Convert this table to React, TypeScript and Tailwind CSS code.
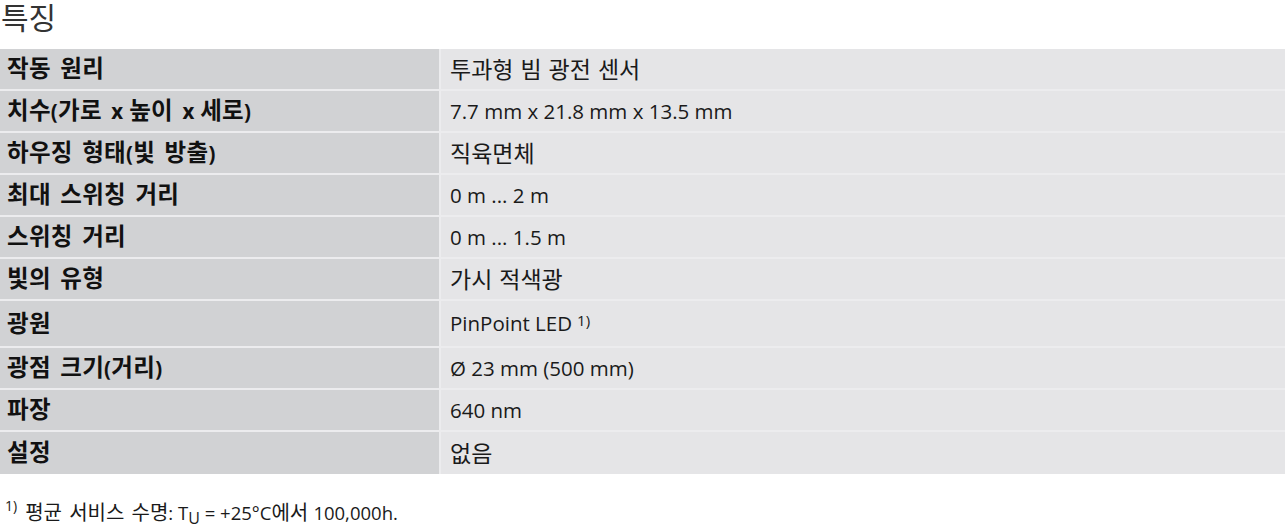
import React from "react";

function K({ t, cls }: { t: string; cls: string }) {
  const parts = t.split(/([\uAC00-\uD7A3][\uAC00-\uD7A3 ]*)/);
  return (
    <>
      {parts.map((p, i) =>
        /[\uAC00-\uD7A3]/.test(p) ? (
          <span key={i} className={cls}>
            {p}
          </span>
        ) : (
          <React.Fragment key={i}>{p}</React.Fragment>
        )
      )}
    </>
  );
}

const rows: { k: string; v: string; tall?: boolean }[] = [
  { k: "작동 원리", v: "투과형 빔 광전 센서" },
  { k: "치수(가로 x 높이 x 세로)", v: "7.7 mm x 21.8 mm x 13.5 mm" },
  { k: "하우징 형태(빛 방출)", v: "직육면체" },
  { k: "최대 스위칭 거리", v: "0 m ... 2 m" },
  { k: "스위칭 거리", v: "0 m ... 1.5 m" },
  { k: "빛의 유형", v: "가시 적색광" },
  { k: "광원", v: "PinPoint LED", tall: true },
  { k: "광점 크기(거리)", v: "Ø 23 mm (500 mm)" },
  { k: "파장", v: "640 nm" },
  { k: "설정", v: "없음" },
];

export default function App() {
  return (
    <div
      className="w-[1285px] h-[532px] bg-white text-[#1a1a1a] overflow-hidden"
      style={{ fontFamily: '"Open Sans", "Noto Sans CJK KR", sans-serif' }}
    >
      <h1 className="text-[30px] leading-[36px] text-[#333] font-normal h-[49px] pl-[1px]">
        특징
      </h1>
      <div className="flex flex-col">
        {rows.map((r, i) => (
          <div
            key={i}
            className={`flex ${r.tall ? "h-[47px]" : "h-[42px]"} ${
              i < rows.length - 1 ? "border-b-2 border-[#ececee]" : ""
            }`}
          >
            <div className="w-[439px] bg-[#d1d2d4] pl-[7px] flex items-center text-[20.5px] font-bold text-[#111] tracking-[0.3px]">
              <span>
                <K t={r.k} cls="text-[23.5px] [word-spacing:3px]" />
              </span>
            </div>
            <div className="w-[2px] bg-[#ececee]" />
            <div className="flex-1 bg-[#e5e5e7] pl-[9px] flex items-center text-[20.5px] text-[#1a1a1a]">
              <span>
                <K t={r.v} cls="text-[23px] [word-spacing:1px]" />
                {r.tall ? (
                  <sup className="text-[15px] ml-[5px] relative -top-[5px]">1)</sup>
                ) : null}
              </span>
            </div>
          </div>
        ))}
      </div>
      <div className="mt-[25px] pl-[5px] flex items-start text-[18.5px] text-[#1a1a1a]">
        <span className="text-[14px] leading-none mt-[0px] mr-[8px]">1)</span>
        <span className="mt-[3px] leading-[22px]">
          <K t="평균 서비스 수명" cls="text-[20px] [word-spacing:2px]" />: T
          <sub className="text-[16px]">U</sub> = +25°C
          <K t="에서 " cls="text-[20px]" />100,000h.
        </span>
      </div>
    </div>
  );
}
